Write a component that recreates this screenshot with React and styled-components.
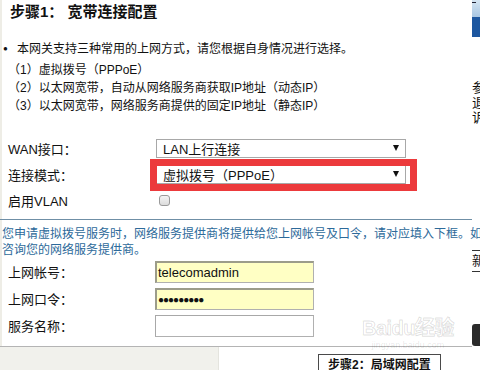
import React from 'react';
import styled, { createGlobalStyle } from 'styled-components';

const FONT = `"Liberation Sans", "Noto Sans CJK SC", sans-serif`;

const GlobalStyle = createGlobalStyle`
    html, body {
        margin: 0;
        padding: 0;
        background: #fff;
        font-family: ${FONT};
        color: #111;
    }
`;

// 전체 화면
const Page = styled.div`
    position: relative;
    display: flex;
    width: 480px;
    height: 370px;
    overflow: hidden;
    background: #fff;
`;

// 왼쪽 메인 패널
const Main = styled.div`
    display: flex;
    flex-direction: column;
    flex-shrink: 0;
    width: 472px;
    box-sizing: border-box;
    border-left: 2px solid #eeede6;
`;

const Title = styled.h1`
    margin: 0;
    padding: 4px 0 0 8px;
    font-size: 15px;
    line-height: 16px;
    font-weight: bold;
`;

const Intro = styled.div`
    margin-top: 20px;
    font-size: 12px;
    line-height: 18px;
    white-space: nowrap;
`;

const BulletLine = styled.div`
    display: flex;
    padding-left: 1px;
`;

const Dot = styled.span`
    width: 14px;
    font-size: 8px;
`;

const Option = styled.div`
    padding-left: 6px;
    margin-top: ${(p) => (p.$first ? '3px' : '0')};
`;

const Form = styled.div`
    margin-top: ${(p) => p.$top || 0}px;
`;

const Row = styled.div`
    display: flex;
    align-items: center;
    height: ${(p) => p.$h}px;
`;

const Label = styled.div`
    width: 147px;
    padding-left: 6px;
    font-size: 13px;
    white-space: nowrap;
`;

const Field = styled.div`
    position: relative;
    display: flex;
    align-items: center;
`;

const Select = styled.div`
    display: flex;
    align-items: center;
    justify-content: space-between;
    width: 250px;
    height: 19px;
    margin-left: 1px;
    padding: 0 6px;
    box-sizing: border-box;
    border: 1px solid #a8a8a8;
    background: #fff;
    font-size: 13px;
    white-space: nowrap;
`;

const Arrow = styled.span`
    width: 0;
    height: 0;
    border-left: 3px solid transparent;
    border-right: 3px solid transparent;
    border-top: 6px solid #111;
`;

// 강조용 빨간 테두리 (겹쳐 그리는 표시)
const Highlight = styled.span`
    position: absolute;
    top: -6px;
    left: -5px;
    right: -11px;
    bottom: -7px;
    border: 7px solid #ec3a3c;
    pointer-events: none;
`;

const Checkbox = styled.span`
    width: 11px;
    height: 11px;
    margin-left: 4px;
    box-sizing: border-box;
    border: 1px solid #9a9a9a;
    border-radius: 3px;
    background: linear-gradient(#f4f4f4, #dcdcdc);
`;

const Divider = styled.div`
    margin: 6px 0 0 -2px;
    border-top: 1px solid #6f8fa6;
`;

const Note = styled.p`
    margin: 0;
    padding-top: 6px;
    font-size: 12px;
    line-height: 16px;
    color: #2d6a9a;
    white-space: nowrap;
`;

const Input = styled.div`
    display: flex;
    align-items: center;
    width: 159px;
    height: 22px;
    box-sizing: border-box;
    padding-left: 1px;
    background: ${(p) => (p.$filled ? '#ffffc4' : '#fff')};
    border: 1px solid #b0b0b0;
    border-top: ${(p) => (p.$filled ? '2px solid #9c9c8a' : '1px solid #a8a8a8')};
    border-left: ${(p) => (p.$filled ? '2px solid #9c9c8a' : '1px solid #a8a8a8')};
    font-size: 13px;
    white-space: nowrap;
`;

const Dots = styled.span`
    font-size: 10px;
    letter-spacing: -1px;
`;

const BottomRule = styled.div`
    margin: 7px 0 0 -2px;
    border-top: 1px solid #b4b4b4;
`;

const Footer = styled.div`
    display: flex;
    flex: 1;
    margin-left: -2px;
`;

const GrayBlock = styled.div`
    width: 218px;
    background: #f1f1ec;
    border-right: 1px solid #e4e4de;
`;

const StepButton = styled.div`
    align-self: flex-start;
    margin: 7px 0 0 99px;
    padding: 0 9px;
    height: 22px;
    line-height: 20px;
    box-sizing: border-box;
    border: 1px solid #4a4a4a;
    background: #fff;
    font-size: 12px;
    font-weight: bold;
    white-space: nowrap;
`;

// 오른쪽 잘린 사이드 영역
const Side = styled.aside`
    display: flex;
    flex-direction: column;
    width: 8px;
    overflow: hidden;
    font-size: 13px;
    line-height: 15px;
    white-space: nowrap;
`;

const SideTop = styled.div`
    position: relative;
    height: 17px;
    background: linear-gradient(#d6e6f3, #a8c6e2);

    &::before {
        content: '';
        position: absolute;
        top: 2px;
        left: 0;
        width: 4px;
        border-top: 1px solid #223;
    }
`;

const SideBar = styled.div`
    height: 20px;
    background: #1d57a0;
`;

const SideText = styled.div`
    margin-top: 43px;
`;

const SideTab = styled.div`
    margin-top: 125px;
    height: 20px;
    line-height: 20px;
    border-top: 1px solid #333;
    border-bottom: 1px solid #333;
`;

const SideBadge = styled.div`
    margin-top: 52px;
    height: 22px;
    border-radius: 3px 0 0 3px;
    background: #2b2b2b;
`;

// 워터마크
const Watermark = styled.div`
    position: absolute;
    left: 362px;
    top: 316px;
    pointer-events: none;
    text-align: center;
`;

const MarkBig = styled.div`
    font-size: 20px;
    font-weight: bold;
    line-height: 24px;
    letter-spacing: -0.5px;
    color: transparent;
    -webkit-text-stroke: 1px rgba(0, 0, 0, 0.13);
`;

const MarkSmall = styled.div`
    font-size: 9px;
    line-height: 10px;
    color: rgba(0, 0, 0, 0.1);
`;

export default function App() {
    return (
        <Page>
            <GlobalStyle />
            <Main>
                <Title>步骤1： 宽带连接配置</Title>

                {/* 안내 문구 */}
                <Intro>
                    <BulletLine>
                        <Dot>●</Dot>
                        <span>本网关支持三种常用的上网方式，请您根据自身情况进行选择。</span>
                    </BulletLine>
                    <Option $first>（1）虚拟拨号（PPPoE）</Option>
                    <Option>（2）以太网宽带，自动从网络服务商获取IP地址（动态IP）</Option>
                    <Option>（3）以太网宽带，网络服务商提供的固定IP地址（静态IP）</Option>
                </Intro>

                {/* WAN 설정 */}
                <Form $top={20}>
                    <Row $h={26}>
                        <Label>WAN接口：</Label>
                        <Field>
                            <Select>
                                LAN上行连接
                                <Arrow />
                            </Select>
                        </Field>
                    </Row>
                    <Row $h={26}>
                        <Label>连接模式：</Label>
                        <Field>
                            <Select>
                                虚拟拨号（PPPoE）
                                <Arrow />
                            </Select>
                            <Highlight />
                        </Field>
                    </Row>
                    <Row $h={26}>
                        <Label>启用VLAN</Label>
                        <Field>
                            <Checkbox />
                        </Field>
                    </Row>
                </Form>

                <Divider />
                <Note>
                    您申请虚拟拨号服务时，网络服务提供商将提供给您上网帐号及口令，请对应填入下框。如
                    <br />
                    咨询您的网络服务提供商。
                </Note>

                {/* 계정 입력 */}
                <Form>
                    <Row $h={27}>
                        <Label>上网帐号：</Label>
                        <Input $filled>telecomadmin</Input>
                    </Row>
                    <Row $h={27}>
                        <Label>上网口令：</Label>
                        <Input $filled>
                            <Dots>●●●●●●●●●</Dots>
                        </Input>
                    </Row>
                    <Row $h={27}>
                        <Label>服务名称：</Label>
                        <Input />
                    </Row>
                </Form>

                <BottomRule />
                <Footer>
                    <GrayBlock />
                    <StepButton>步骤2：局域网配置</StepButton>
                </Footer>
            </Main>

            <Side>
                <SideTop />
                <SideBar />
                <SideText>
                    参<br />
                    退<br />
                    诉
                </SideText>
                <SideTab>新</SideTab>
                <SideBadge />
            </Side>

            <Watermark>
                <MarkBig>Baidu经验</MarkBig>
                <MarkSmall>jingyan.baidu.com</MarkSmall>
            </Watermark>
        </Page>
    );
}
